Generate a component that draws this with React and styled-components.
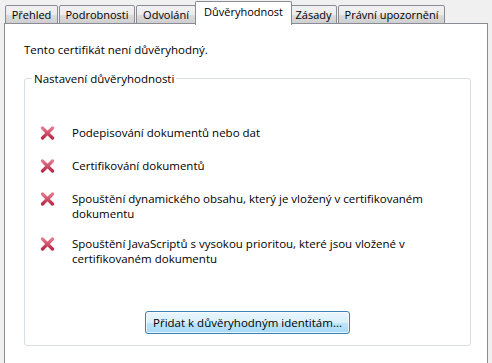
import styled, { createGlobalStyle } from "styled-components";

const GlobalStyle = createGlobalStyle`
  html, body {
    margin: 0;
    padding: 0;
    background: #f0f0f0;
  }
  body {
    font-family: "Open Sans", "Noto Sans", sans-serif;
    font-size: 11.5px;
    color: #000;
  }
`;

const tabs = [
  { label: "Přehled", w: 53 },
  { label: "Podrobnosti", w: 76 },
  { label: "Odvolání", w: 60 },
  { label: "Důvěryhodnost", w: 97, active: true },
  { label: "Zásady", w: 47 },
  { label: "Právní upozornění", w: 107 },
];

const items = [
  "Podepisování dokumentů nebo dat",
  "Certifikování dokumentů",
  "Spouštění dynamického obsahu, který je vložený v certifikovaném dokumentu",
  "Spouštění JavaScriptů s vysokou prioritou, které jsou vložené v certifikovaném dokumentu",
];

function CrossIcon() {
  return (
    <svg width="15" height="14" viewBox="0 0 15 14">
      <defs>
        <linearGradient id="xg" x1="0" y1="0" x2="0" y2="1">
          <stop offset="0" stopColor="#e27a8f" />
          <stop offset="1" stopColor="#b82a48" />
        </linearGradient>
      </defs>
      <path
        d="M2.5 2 L12.5 12 M12.5 2 L2.5 12"
        stroke="url(#xg)"
        strokeWidth="3.2"
        strokeLinecap="round"
        fill="none"
      />
    </svg>
  );
}

function App() {
  return (
    <>
      <GlobalStyle />
      <Window>
        <TabBar>
          {tabs.map((t) => (
            <Tab key={t.label} $w={t.w} $active={t.active}>
              {t.label}
            </Tab>
          ))}
        </TabBar>
        <Pane>
          <Status>Tento certifikát není důvěryhodný.</Status>
          <Group>
            <Legend>Nastavení důvěryhodnosti</Legend>
            <List>
              {items.map((text) => (
                <Item key={text}>
                  <IconSlot>
                    <CrossIcon />
                  </IconSlot>
                  <ItemText>{text}</ItemText>
                </Item>
              ))}
            </List>
            <Button type="button">Přidat k důvěryhodným identitám...</Button>
          </Group>
        </Pane>
      </Window>
    </>
  );
}

const Window = styled.div`
  width: 492px;
  height: 363px;
  overflow: hidden;
  background: #f0f0f0;
`;

const TabBar = styled.div`
  display: flex;
  align-items: flex-end;
  height: 24px;
  padding-left: 5px;
  position: relative;
  z-index: 1;
`;

const Tab = styled.div`
  box-sizing: border-box;
  width: ${(p) => p.$w}px;
  height: ${(p) => (p.$active ? 24 : 19)}px;
  margin: ${(p) => (p.$active ? "0 -2px -1px -2px" : "0 1px 0 0")};
  border: 1px solid #898c95;
  border-bottom: ${(p) => (p.$active ? "none" : "1px solid #898c95")};
  border-radius: 2px 2px 0 0;
  background: ${(p) =>
    p.$active
      ? "#fff"
      : "linear-gradient(#f2f2f2 0%, #ebebeb 50%, #dddddd 51%, #cfcfcf 100%)"};
  padding: ${(p) => (p.$active ? "2px 0 0 0" : "1px 0 0 0")};
  font-size: 11px;
  text-align: center;
  line-height: 15px;
  white-space: nowrap;
  position: relative;
  z-index: ${(p) => (p.$active ? 2 : 1)};
`;

const Pane = styled.div`
  box-sizing: border-box;
  margin-left: 4px;
  width: 484px;
  height: 360px;
  margin-top: -1px;
  border: 1px solid #898c95;
  background: #fff;
  padding: 18px 16px 0 19px;
`;

const Status = styled.div`
  line-height: 15px;
`;

const Group = styled.fieldset`
  box-sizing: border-box;
  margin: 14px 0 0 0;
  min-width: 0;
  height: 275px;
  border: 1px solid #d5dfe5;
  border-radius: 3px;
  padding: 39px 0 11px 15px;
  display: flex;
  flex-direction: column;
`;

const Legend = styled.legend`
  padding: 0 2px;
  margin-left: -8px;
  line-height: 15px;
`;

const List = styled.div`
  display: flex;
  flex-direction: column;
  gap: 15px;
`;

const Item = styled.div`
  display: flex;
  align-items: flex-start;
`;

const IconSlot = styled.div`
  width: 32px;
  flex: none;
  padding-top: 1px;
`;

const ItemText = styled.div`
  line-height: 15px;
  max-width: 378px;
`;

const Button = styled.button`
  align-self: center;
  margin-top: auto;
  margin-left: -15px;
  width: 205px;
  height: 23px;
  border: 1px solid #3c7fb1;
  border-radius: 3px;
  box-shadow: inset 0 0 0 1px rgba(255, 255, 255, 0.7);
  background: linear-gradient(#eaf6fd 0%, #d9f0fc 50%, #bee6fd 51%, #a7d9f5 100%);
  font-family: inherit;
  font-size: 11.5px;
  color: #000;
  padding: 0;
`;

export default App;
